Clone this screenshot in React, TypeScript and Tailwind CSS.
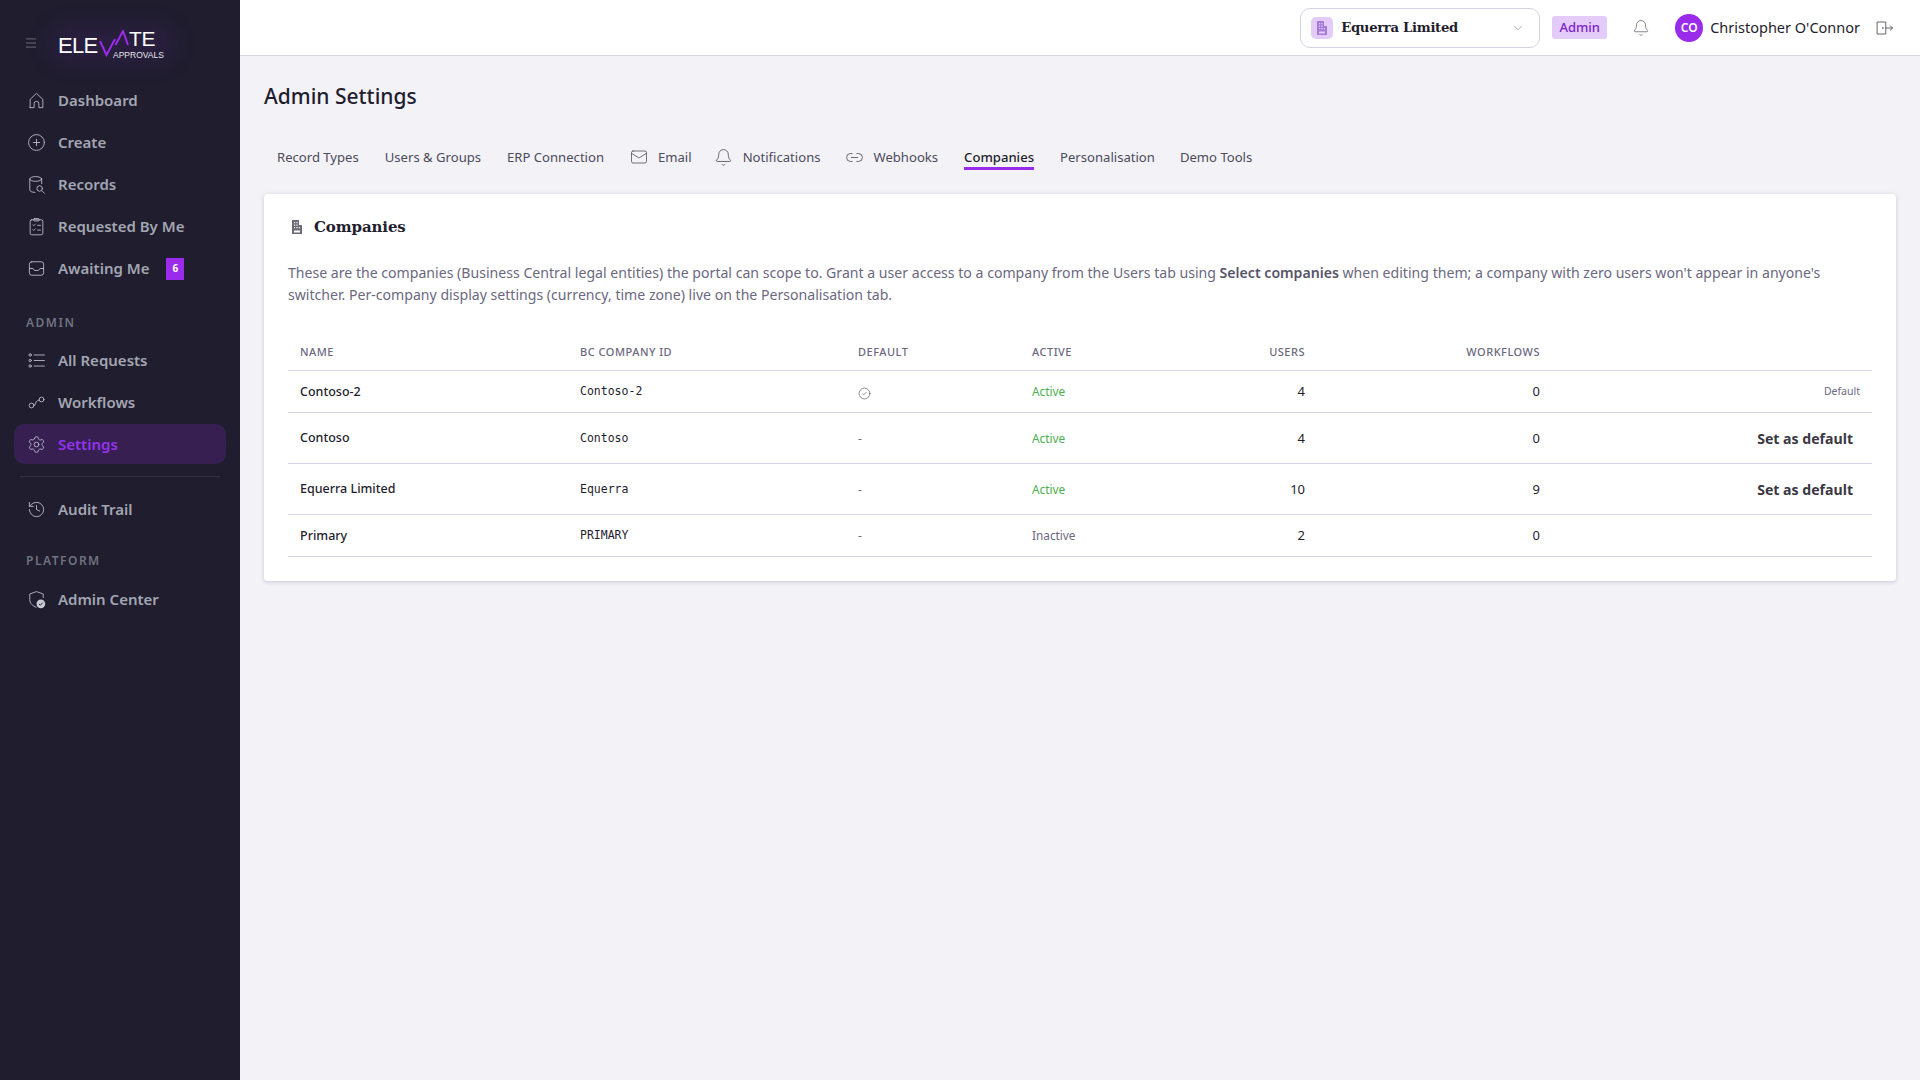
import React from "react";
import { CirclePlus, Settings, History, Mail, Bell, Link2, ChevronDown, CircleCheck, Menu } from "lucide-react";

const sans = "font-['Noto_Sans','Open_Sans',sans-serif]";

const I = ({ children, size = 19, sw = 1.1 }: { children: React.ReactNode; size?: number; sw?: number }) => (
  <svg width={size} height={size} viewBox="0 0 24 24" fill="none" stroke="currentColor" strokeWidth={sw} strokeLinecap="round" strokeLinejoin="round" className="shrink-0">
    {children}
  </svg>
);

const RecordsIcon = () => (
  <I>
    <ellipse cx="11" cy="5" rx="7.5" ry="3" />
    <path d="M3.5 5v14c0 1.6 3 3 6.5 3M18.500 5v6" />
    <circle cx="16" cy="17" r="3.500" />
    <path d="m19 20 3 3" />
  </I>
);
const ClipIcon = () => (
  <I>
    <rect x="4" y="3.500" width="16" height="19" rx="2" />
    <rect x="8.500" y="2" width="7" height="3" rx="1" />
    <path d="m7.500 10 1 1 2-2M13.500 10.500h3.500M7.500 16l1 1 2-2M13.500 16.500h3.500" />
  </I>
);
const InboxIcon = () => (
  <I>
    <rect x="3" y="3.500" width="18" height="17" rx="3" />
    <path d="M3 12h4.500c.8 0 1 2.500 2.500 2.500h4c1.500 0 1.700-2.500 2.500-2.500H21" />
  </I>
);
const ListIcon = () => (
  <I>
    <circle cx="4" cy="5" r="1.500" />
    <circle cx="4" cy="12" r="1.500" />
    <circle cx="4" cy="19" r="1.500" />
    <path d="M9 5h13M9 12h13M9 19h13" />
  </I>
);
const FlowIcon = () => (
  <I>
    <circle cx="5.700" cy="15.800" r="3" />
    <circle cx="18.400" cy="8.200" r="3" />
    <path d="M8.700 15.500c3-.5 1.500-2.500 3-4.500 1-1.300 2.500-1.800 3.800-2.300" />
  </I>
);
const ShieldIcon = () => (
  <svg width="19" height="19" viewBox="0 0 24 24" fill="none" className="shrink-0">
    <path d="M12 2 3.500 5v7c0 5 3.500 8 8.500 10" stroke="currentColor" strokeWidth="1.100" strokeLinejoin="round" />
    <path d="M12 2l8.500 3v5" stroke="currentColor" strokeWidth="1.100" strokeLinejoin="round" />
    <circle cx="17.500" cy="17.500" r="5.500" fill="#c9cad2" />
    <path d="m15 17.500 1.800 1.800 3-3.300" stroke="#1f1d2e" strokeWidth="1.200" />
  </svg>
);
const BuildingIcon = ({ className = "" }: { className?: string }) => (
  <svg width="12" height="14" viewBox="0 0 12 14" className={`shrink-0 ${className}`} fill="currentColor">
    <path fillRule="evenodd" d="M1.500 0H7.500a.5.5 0 0 1 .5.500V5h2.500a.5.5 0 0 1 .5.500V13.500a.5.5 0 0 1-.5.500H1.500a.5.5 0 0 1-.5-.500V.500a.5.5 0 0 1 .5-.500ZM3 2v1.300h1.200V2H3Zm2.400 0v1.300h1.200V2H5.400ZM3 4.500v1.300h1.200V4.500H3Zm2.400 0v1.300h1.200V4.500H5.400ZM3 7v1.300h1.200V7H3Zm2.400 0v1.300h1.200V7H5.400Zm2.400 0v1.300H9V7H7.800ZM3 10.500V12.600h6V10.500H3Z" />
  </svg>
);
const DoorIcon = () => (
  <I size={18} sw={1.2}>
    <rect x="2" y="4" width="11" height="16" />
    <circle cx="9" cy="12" r="0.400" />
    <path d="M13 12h9M19 9l3 3-3 3" />
  </I>
);

const NavItem = ({ icon, label, active, badge }: { icon: React.ReactNode; label: string; active?: boolean; badge?: string }) => (
  <div className={`flex h-10 items-center rounded-[10px] pl-[12px] ${active ? "bg-[#371f52]" : ""}`}>
    <span className="flex w-5 justify-center text-[#bfc0c9]">{icon}</span>
    <span className={`ml-[12px] text-[15px] font-semibold ${active ? "text-[#9333ea]" : "text-[#a3a6b2]"}`}>{label}</span>
    {badge && (
      <span className="ml-[17px] mt-[1px] flex h-[22px] w-[18px] items-center justify-center bg-[#9a2bea] text-[10px] font-bold text-white">{badge}</span>
    )}
  </div>
);

const SectionLabel = ({ children, className = "" }: { children: React.ReactNode; className?: string }) => (
  <div className={`pl-[26px] text-[12px] font-semibold tracking-[1.5px] text-[#6f7280] ${className}`}>{children}</div>
);

const Sidebar = () => (
  <aside className="flex min-h-screen w-[240px] shrink-0 flex-col bg-[#1f1d2e]">
    <div className="flex h-[80px] items-center pl-[24px]">
      <Menu size={14} strokeWidth={1.2} className="mt-[6px] text-[#8b8d99]" />
      <div className="relative ml-[20px] h-[36px] w-[120px] font-['Liberation_Sans',sans-serif] text-white">
        <div className="absolute left-[-6px] top-[4px] h-[36px] w-[120px] rounded-lg bg-[#9333ea]/10 blur-md" />
        <span className="absolute left-0 top-[10px] text-[22px] leading-[28px] tracking-[-0.7px]">ELE</span>
        <svg width="36" height="28" viewBox="0 0 36 28" fill="none" className="absolute left-[38px] top-[8px]">
          <path d="M4 11l6.500 14L19 9" stroke="#9a2bea" strokeWidth="2" />
          <path d="M19.500 15 27 1l5 14" stroke="#9a2bea" strokeWidth="2" />
        </svg>
        <span className="absolute left-[71px] top-[3px] text-[21px] leading-[28px] tracking-[-0.3px]">TE</span>
        <span className="absolute left-[55px] top-[27px] text-[8.500px] leading-[12px] text-[#e5e5ea]">APPROVALS</span>
      </div>
    </div>
    <nav className="flex flex-col gap-[2px] px-[14px] pt-0">
      <NavItem icon={<I><path d="M4 21V10.500L12 3l8 7.500V21h-5v-5a3 3 0 0 0-6 0v5H4Z" /></I>} label="Dashboard" />
      <NavItem icon={<CirclePlus size={19} strokeWidth={1.1} />} label="Create" />
      <NavItem icon={<RecordsIcon />} label="Records" />
      <NavItem icon={<ClipIcon />} label="Requested By Me" />
      <NavItem icon={<InboxIcon />} label="Awaiting Me" badge="6" />
    </nav>
    <SectionLabel className="mt-[27px] mb-[9px] leading-[16px]">ADMIN</SectionLabel>
    <nav className="flex flex-col gap-[2px] px-[14px]">
      <NavItem icon={<ListIcon />} label="All Requests" />
      <NavItem icon={<FlowIcon />} label="Workflows" />
      <NavItem icon={<Settings size={19} strokeWidth={1.1} />} label="Settings" active />
    </nav>
    <div className="mx-[20px] mt-3 mb-3 h-px bg-[#33313f]" />
    <nav className="px-[14px]">
      <NavItem icon={<History size={19} strokeWidth={1.1} />} label="Audit Trail" />
    </nav>
    <SectionLabel className="mt-[24px] mb-[10px] leading-[16px]">PLATFORM</SectionLabel>
    <nav className="px-[14px]">
      <NavItem icon={<ShieldIcon />} label="Admin Center" />
    </nav>
  </aside>
);

const Topbar = () => (
  <header className="flex h-[56px] shrink-0 items-center justify-end border-b border-[#d9d7e2] bg-white pr-[26px]">
    <div className="flex h-10 w-[240px] items-center rounded-[10px] border border-[#d5d2e2] bg-white pl-[10px] pr-[14px]">
      <span className="flex h-[22px] w-[22px] items-center justify-center rounded-[5px] bg-[#e3ccf9] text-[#a67bd6]">
        <BuildingIcon />
      </span>
      <span className="ml-[8px] flex-1 font-['DejaVu_Serif',serif] text-[13.200px] font-bold tracking-[-0.3px] text-[#1f1d2e]">Equerra Limited</span>
      <ChevronDown size={14} strokeWidth={1.2} className="text-[#8f8d9e]" />
    </div>
    <span className="ml-3 flex h-[23px] w-[55px] items-center justify-center rounded-[3px] bg-[#e3ccf9] text-[13px] font-medium text-[#7e22ce]">Admin</span>
    <span className="ml-[25px] text-[#6f6d7c]"><Bell size={18} strokeWidth={1.1} /></span>
    <span className="ml-[25px] flex h-7 w-7 items-center justify-center rounded-full bg-[#9a2bea] text-[12px] font-semibold text-white">CO</span>
    <span className="ml-[7px] text-[14.500px] text-[#1f1d2e]">Christopher O'Connor</span>
    <span className="ml-[16px] text-[#55535f]"><DoorIcon /></span>
  </header>
);

const tabs: { label: string; icon?: React.ReactNode; active?: boolean; cls?: string }[] = [
  { label: "Record Types" },
  { label: "Users & Groups" },
  { label: "ERP Connection" },
  { label: "Email", icon: <Mail size={18} strokeWidth={1.1} /> },
  { label: "Notifications", icon: <Bell size={19} strokeWidth={1.1} />, cls: "-ml-[4px]" },
  { label: "Webhooks", icon: <Link2 size={19} strokeWidth={1.1} />, cls: "-ml-[2px]" },
  { label: "Companies", active: true },
  { label: "Personalisation" },
  { label: "Demo Tools", cls: "-ml-[1px]" },
];

const Tabs = () => (
  <div className="mt-[37px] flex h-[36px] items-start">
    {tabs.map((t) => (
      <div key={t.label} className={`flex items-start gap-[10px] px-[13px] text-[13.100px] text-[#4d4b5c] ${t.cls ?? ""}`}>
        {t.icon && <span className="text-[#55535f]">{t.icon}</span>}
        <span className={`block border-b-[3px] leading-[19px] ${t.active ? "border-[#9a2bea] font-medium text-[#1f1d2e]" : "border-transparent"}`}>{t.label}</span>
      </div>
    ))}
  </div>
);

const rows = [
  { name: "Contoso-2", id: "Contoso-2", def: true, active: true, users: "4", wf: "0", action: "label", h: "h-[42px]" },
  { name: "Contoso", id: "Contoso", def: false, active: true, users: "4", wf: "0", action: "button", h: "h-[51px]" },
  { name: "Equerra Limited", id: "Equerra", def: false, active: true, users: "10", wf: "9", action: "button", h: "h-[51px]" },
  { name: "Primary", id: "PRIMARY", def: false, active: false, users: "2", wf: "0", action: "", h: "h-[42px]" },
];

const th = "px-3 pb-[9px] text-[11px] font-medium tracking-[0.5px] text-[#6b6880]";

const Table = () => (
  <table className="mt-[38px] w-full table-fixed border-collapse">
    <colgroup>
      <col className="w-[280px]" />
      <col className="w-[278px]" />
      <col className="w-[174px]" />
      <col className="w-[192px]" />
      <col className="w-[105px]" />
      <col className="w-[235px]" />
      <col />
    </colgroup>
    <thead>
      <tr className="border-b border-[#d5d2e2]">
        <th className={`${th} text-left`}>NAME</th>
        <th className={`${th} text-left`}>BC COMPANY ID</th>
        <th className={`${th} text-left`}>DEFAULT</th>
        <th className={`${th} text-left`}>ACTIVE</th>
        <th className={`${th} text-right`}>USERS</th>
        <th className={`${th} text-right`}>WORKFLOWS</th>
        <th className={th}></th>
      </tr>
    </thead>
    <tbody>
      {rows.map((r) => (
        <tr key={r.name} className={`${r.h} border-b border-[#d5d2e2]`}>
          <td className="px-3 pt-[2px] text-[12.500px] font-medium text-[#1f1d2e]">{r.name}</td>
          <td className="px-3 pt-[2px] font-['DejaVu_Sans_Mono',monospace] text-[11.500px] text-[#1f1d2e]">{r.id}</td>
          <td className="px-3 pt-[2px] text-[12px] text-[#6b6880]">
            {r.def ? <CircleCheck size={13} strokeWidth={1.2} className="mt-[2px] text-[#55535f]" /> : "-"}
          </td>
          <td className={`px-3 pt-[2px] text-[11.800px] ${r.active ? "text-[#4caf50]" : "text-[#6b6880]"}`}>{r.active ? "Active" : "Inactive"}</td>
          <td className="px-3 pt-[2px] text-right text-[13px] text-[#1f1d2e]">{r.users}</td>
          <td className="px-3 pt-[2px] text-right text-[13px] text-[#1f1d2e]">{r.wf}</td>
          <td className="px-3 pt-[2px] text-right">
            {r.action === "label" && <div className="text-[10.500px] text-[#6b6880]">Default</div>}
            {r.action === "button" && <div className="pr-[7px] text-[14.100px] font-bold text-[#3a3844]">Set as default</div>}
          </td>
        </tr>
      ))}
    </tbody>
  </table>
);

export default function App() {
  return (
    <div className={`flex min-h-screen bg-[#f3f2f7] ${sans}`}>
      <Sidebar />
      <div className="flex min-w-0 flex-1 flex-col">
        <Topbar />
        <main className="px-[24px] pt-[6px]">
          <h1 className="mt-[19px] text-[21px] font-medium leading-[30px] text-[#1f1d2e]">Admin Settings</h1>
          <Tabs />
          <section className="mt-[10px] rounded-[4px] bg-white px-[24px] pb-[24px] pt-[22px] shadow-[0_1px_4px_rgba(30,25,60,0.2)]">
            <div className="flex h-[22px] items-center pl-[3px]">
              <BuildingIcon className="text-[#6c6a76]" />
              <h2 className="ml-[11px] font-['DejaVu_Serif',serif] text-[15px] font-bold tracking-[-0.1px] text-[#1f1d2e]">Companies</h2>
            </div>
            <p className="mt-[24px] text-[14.100px] leading-[22px] text-[#6b6880]">
              These are the companies (Business Central legal entities) the portal can scope to. Grant a user access to a company from the Users tab using <strong className="font-semibold text-[#57546b]">Select companies</strong> when editing them; a company with zero users won't appear in anyone's switcher. Per-company display settings (currency, time zone) live on the Personalisation tab.
            </p>
            <Table />
          </section>
        </main>
      </div>
    </div>
  );
}
